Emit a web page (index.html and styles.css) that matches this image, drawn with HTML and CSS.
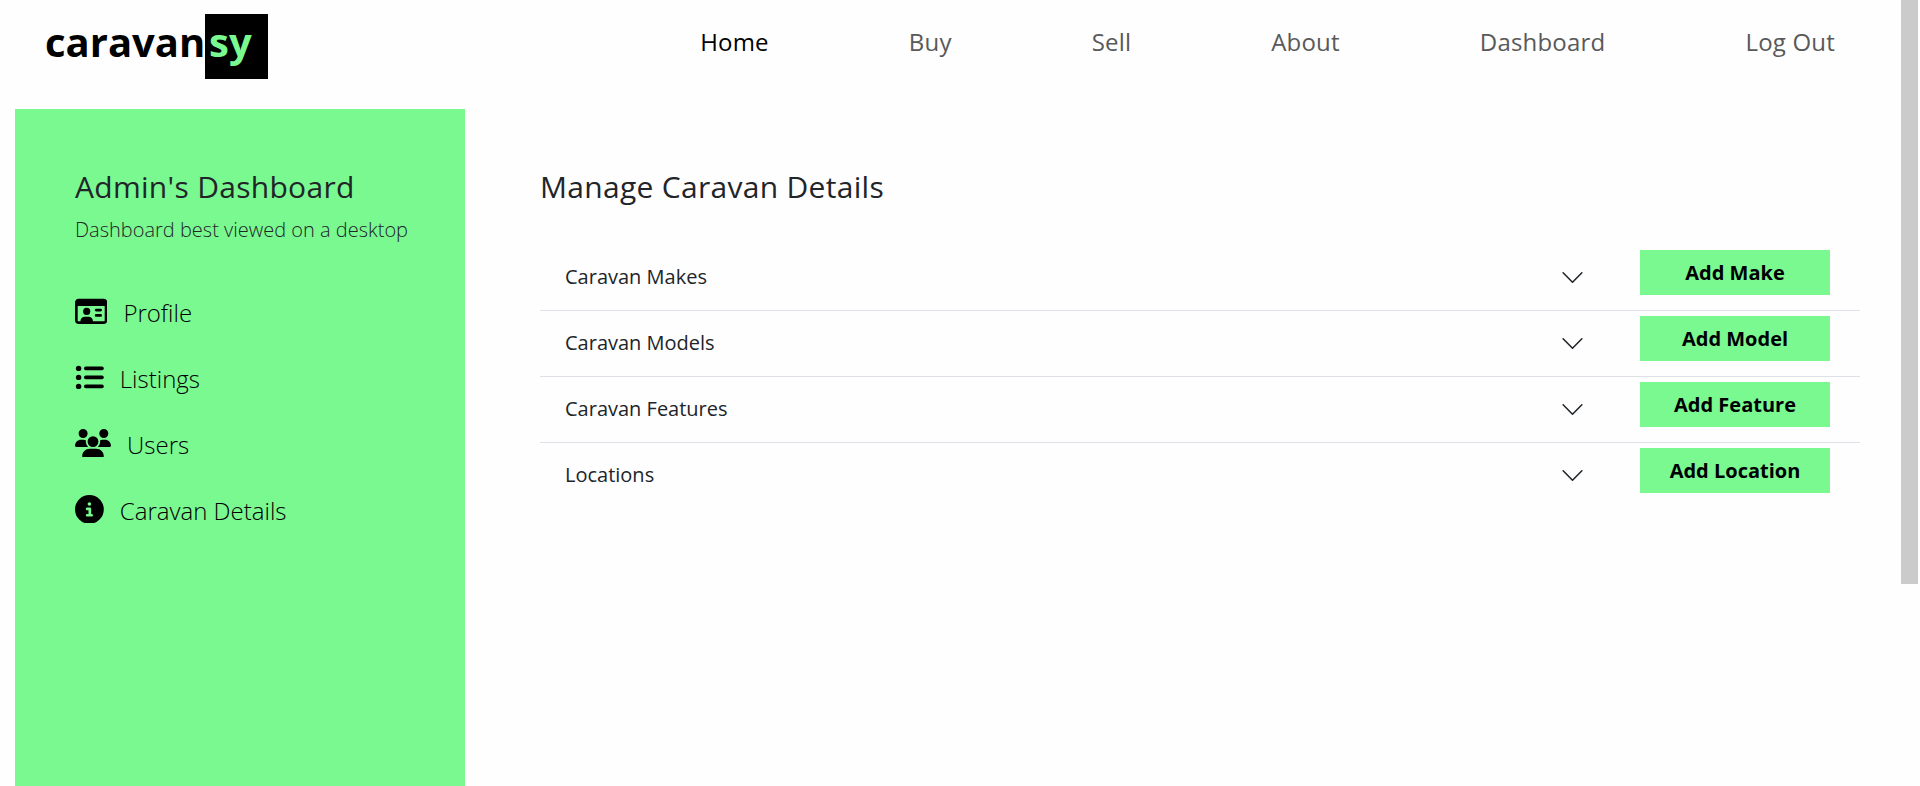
FILE: index.html
```html
<!DOCTYPE html>
<html lang="en">
<head>
<meta charset="utf-8">
<title>Caravansy</title>
<link rel="stylesheet" href="styles.css">
</head>
<body>
<header class="navbar">
  <a class="brand"><span class="brand-name">caravan</span><span class="brand-tail">sy</span></a>
  <nav class="nav">
    <a class="nav-link active">Home</a>
    <a class="nav-link">Buy</a>
    <a class="nav-link">Sell</a>
    <a class="nav-link">About</a>
    <a class="nav-link">Dashboard</a>
    <a class="nav-link">Log Out</a>
  </nav>
</header>
<div class="layout">
  <aside class="sidebar">
    <h1 class="title">Admin's Dashboard</h1>
    <p class="hint">Dashboard best viewed on a desktop</p>
    <ul class="menu">
      <li class="menu-item"><svg class="icon" viewBox="0 0 576 512" width="32.4" height="28.8"><path d="M528 160V416c0 8.800-7.200 16-16 16H320c0-44.200-35.800-80-80-80H176c-44.200 0-80 35.800-80 80H64c-8.800 0-16-7.200-16-16V160H528zM64 32C28.700 32 0 60.700 0 96V416c0 35.300 28.700 64 64 64H512c35.300 0 64-28.700 64-64V96c0-35.300-28.700-64-64-64H64zM272 256a64 64 0 1 0 -128 0 64 64 0 1 0 128 0zm104-48c-13.300 0-24 10.700-24 24s10.700 24 24 24h80c13.300 0 24-10.700 24-24s-10.700-24-24-24H376zm0 96c-13.300 0-24 10.700-24 24s10.700 24 24 24h80c13.300 0 24-10.700 24-24s-10.700-24-24-24H376z"/></svg><span>Profile</span></li>
      <li class="menu-item"><svg class="icon" viewBox="0 0 512 512" width="28.8" height="28.8"><circle cx="64" cy="96" r="48"/><circle cx="64" cy="256" r="48"/><circle cx="64" cy="416" r="48"/><rect x="160" y="64" width="352" height="64" rx="32"/><rect x="160" y="224" width="352" height="64" rx="32"/><rect x="160" y="384" width="352" height="64" rx="32"/></svg><span>Listings</span></li>
      <li class="menu-item"><svg class="icon" viewBox="0 0 640 512" width="36" height="28.8"><path d="M144 0a80 80 0 1 1 0 160A80 80 0 1 1 144 0zM512 0a80 80 0 1 1 0 160A80 80 0 1 1 512 0zM0 298.700C0 239.800 47.800 192 106.700 192h42.700c15.900 0 31 3.500 44.600 9.700c-1.300 7.200-1.900 14.700-1.900 22.300c0 38.200 16.800 72.500 43.300 96H21.300C9.600 320 0 310.400 0 298.700zM404.600 320c26.600-23.500 43.300-57.800 43.300-96c0-7.600-.7-15-1.900-22.300c13.600-6.300 28.700-9.700 44.600-9.700h42.700C592.200 192 640 239.800 640 298.700c0 11.800-9.600 21.300-21.300 21.300H404.600zM224 224a96 96 0 1 1 192 0 96 96 0 1 1 -192 0zM128 485.300C128 411.700 187.700 352 261.300 352H378.700C452.300 352 512 411.700 512 485.300c0 14.700-11.900 26.700-26.700 26.700H154.700c-14.700 0-26.700-11.900-26.700-26.700z"/></svg><span>Users</span></li>
      <li class="menu-item"><svg class="icon" viewBox="0 0 512 512" width="28.8" height="28.8"><path d="M256 512A256 256 0 1 0 256 0a256 256 0 1 0 0 512zM216 336h24V272H216c-13.300 0-24-10.700-24-24s10.700-24 24-24h48c13.300 0 24 10.700 24 24v88h8c13.300 0 24 10.700 24 24s-10.700 24-24 24H216c-13.300 0-24-10.700-24-24s10.700-24 24-24zm40-208a32 32 0 1 1 0 64 32 32 0 1 1 0-64z"/></svg><span>Caravan Details</span></li>
    </ul>
  </aside>
  <main class="content">
    <h2 class="title">Manage Caravan Details</h2>
    <div class="accordion">
      <div class="row"><span class="row-name">Caravan Makes</span><svg class="chevron" viewBox="0 0 16 16"><path d="M2 5l6 6 6-6"/></svg><button class="btn">Add Make</button></div>
      <div class="row"><span class="row-name">Caravan Models</span><svg class="chevron" viewBox="0 0 16 16"><path d="M2 5l6 6 6-6"/></svg><button class="btn">Add Model</button></div>
      <div class="row"><span class="row-name">Caravan Features</span><svg class="chevron" viewBox="0 0 16 16"><path d="M2 5l6 6 6-6"/></svg><button class="btn">Add Feature</button></div>
      <div class="row"><span class="row-name">Locations</span><svg class="chevron" viewBox="0 0 16 16"><path d="M2 5l6 6 6-6"/></svg><button class="btn">Add Location</button></div>
    </div>
  </main>
</div>
<div class="scroll-thumb"></div>
</body>
</html>
```
FILE: styles.css
```css
* { box-sizing: border-box; }
html, body { height: 100%; margin: 0; }
body {
  display: flex;
  flex-direction: column;
  overflow: hidden;
  background: #fefefe;
  color: #212529;
  font-family: "Open Sans", sans-serif;
  font-size: 20px;
  line-height: 30px;
}
.navbar {
  flex: none;
  height: 109px;
  display: flex;
  justify-content: space-between;
  align-items: flex-start;
  padding: 14px 85px 0 45px;
}
.brand {
  display: flex;
  color: #000;
  font-size: 40px;
  font-weight: 700;
  line-height: 56px;
}
.brand-name { width: 160px; }
.brand-tail {
  width: 63px;
  height: 65px;
  padding-left: 4px;
  background: #000;
  color: #7af990;
}
.nav { display: flex; gap: 140px; padding-top: 10px; }
.nav-link { color: #595959; font-size: 24px; line-height: 36px; letter-spacing: 0.2px; }
.nav-link.active { color: #000; }
.layout { flex: 1; display: flex; padding: 0 60px 0 15px; }
.sidebar { width: 450px; padding: 60px 0 0 60px; background: #7af990; }
.title {
  margin: 0;
  font-size: 30px;
  font-weight: 400;
  line-height: 36px;
  letter-spacing: 0.3px;
}
.hint { margin: 10px 0 0; font-weight: 300; white-space: nowrap; }
.menu { list-style: none; margin: 51px 0 0; padding: 0; display: grid; gap: 30px; }
.menu-item {
  display: flex;
  gap: 16px;
  height: 36px;
  color: #000;
  font-size: 24px;
  font-weight: 300;
  line-height: 34px;
}
.icon { fill: #000; margin-top: 0.7px; }
.content { flex: 1; padding: 60px 0 0 75px; }
.accordion { margin-top: 40px; }
.row {
  display: flex;
  align-items: center;
  height: 66px;
  padding: 0 30px 0 25px;
  border-bottom: 1px solid #dee2e6;
}
.row:last-child { border-bottom-color: transparent; }
.row-name { flex: 1; padding-bottom: 2px; }
.chevron {
  width: 25px;
  height: 25px;
  margin-right: 55px;
  fill: none;
  stroke: #212529;
  stroke-width: 1;
  stroke-linecap: round;
  stroke-linejoin: round;
}
.btn {
  align-self: flex-start;
  width: 190px;
  height: 45px;
  margin-top: 5px;
  padding: 0;
  border: 0;
  background: #7af990;
  color: #000;
  font: 700 20px/30px "Open Sans", sans-serif;
}
.scroll-thumb {
  position: absolute;
  top: 0;
  right: 2px;
  width: 17px;
  height: 584px;
  background: #cbcbcb;
}
```
